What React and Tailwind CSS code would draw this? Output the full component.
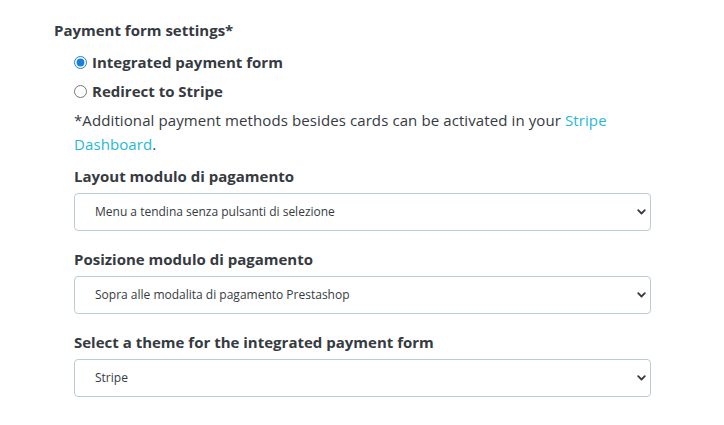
import React from "react";

const fields = [
  { label: "Layout modulo di pagamento", value: "Menu a tendina senza pulsanti di selezione" },
  { label: "Posizione modulo di pagamento", value: "Sopra alle modalita di pagamento Prestashop" },
  { label: "Select a theme for the integrated payment form", value: "Stripe" },
];

const Chevron = () => (
  <svg
    className="pointer-events-none absolute right-[5px] top-1/2 -translate-y-1/2"
    width="9"
    height="6"
    viewBox="0 0 9 6"
    fill="none"
  >
    <path d="M1.2 1.2 L4.5 4.5 L7.8 1.2" stroke="#3d3a3c" strokeWidth="1.8" strokeLinecap="round" strokeLinejoin="round" />
  </svg>
);

const App = () => {
  return (
    <div
      className="w-[724px] h-[425px] bg-white text-[#363a41] pl-[54px] pt-[19px]"
      style={{ fontFamily: '"Open Sans", "Noto Sans", sans-serif' }}
    >
      <h3 className="text-[15px] leading-[22px] font-bold">Payment form settings*</h3>

      <div className="ml-[20px] w-[577px] mt-[7px]">
        {/* Radios */}
        <label className="flex items-center h-[29px] gap-[5px] text-[15px] font-bold">
          <input type="radio" name="form" defaultChecked className="w-[13px] h-[13px] m-0 accent-[#1a7fd6]" />
          Integrated payment form
        </label>
        <label className="flex items-center h-[29px] gap-[5px] text-[15px] font-bold">
          <input type="radio" name="form" className="w-[13px] h-[13px] m-0" />
          Redirect to Stripe
        </label>

        <p className="mt-[2px] text-[15px] leading-[24px] tracking-[0.1px]">
          *Additional payment methods besides cards can be activated in your{" "}
          <a href="#" className="text-[#25b9d7]">
            <span>Stripe</span> <span>Dashboard</span>
          </a>
          .
        </p>

        {/* Selects */}
        {fields.map((field, index) => (
          <div key={index} className={index === 0 ? "mt-[9px]" : "mt-[17px]"}>
            <p className="text-[15px] leading-[22px] font-bold mb-[6px]">{field.label}</p>
            <div className="relative">
              <select
                defaultValue={field.value}
                className="w-full h-[38px] appearance-none rounded-[4px] border border-[#bbcdd2] bg-white pl-[20px] pr-8 text-[12px] text-[#363a41] outline-none"
                style={{ fontFamily: '"Open Sans", "Noto Sans", sans-serif' }}
              >
                <option>{field.value}</option>
              </select>
              <Chevron />
            </div>
          </div>
        ))}
      </div>
    </div>
  );
};

export default App;
